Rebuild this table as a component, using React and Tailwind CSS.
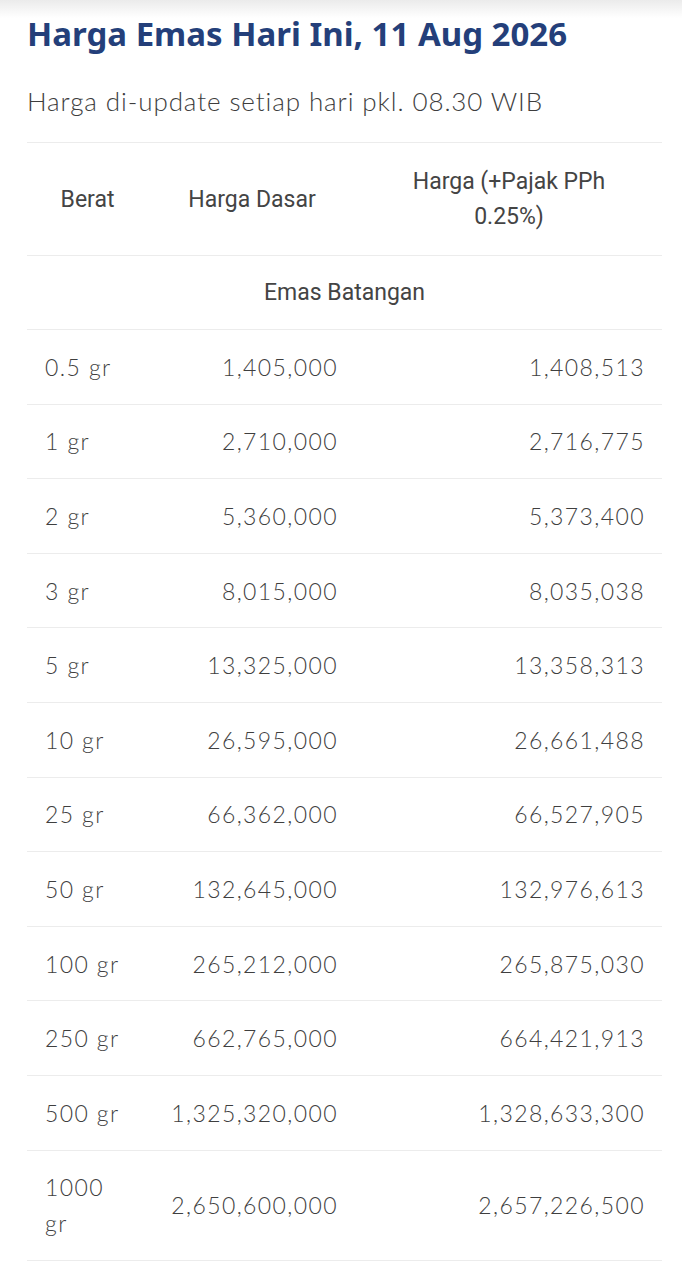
const rows = [
  ["0.5 gr", "1,405,000", "1,408,513"],
  ["1 gr", "2,710,000", "2,716,775"],
  ["2 gr", "5,360,000", "5,373,400"],
  ["3 gr", "8,015,000", "8,035,038"],
  ["5 gr", "13,325,000", "13,358,313"],
  ["10 gr", "26,595,000", "26,661,488"],
  ["25 gr", "66,362,000", "66,527,905"],
  ["50 gr", "132,645,000", "132,976,613"],
  ["100 gr", "265,212,000", "265,875,030"],
  ["250 gr", "662,765,000", "664,421,913"],
  ["500 gr", "1,325,320,000", "1,328,633,300"],
  ["1000 gr", "2,650,600,000", "2,657,226,500"],
];

export default function App() {
  return (
    <div className="min-h-[1262px] bg-[linear-gradient(to_bottom,#ebebeb,#ffffff_18px)] pl-[27px] pr-[20px] pt-[12px] font-['Lato',sans-serif]">
      <h1 className="font-['Noto_Sans',sans-serif] text-[33px] font-bold leading-[44px] text-[#243f7a]">
        Harga Emas Hari Ini, 11 Aug 2026
      </h1>
      <p className="mt-[27px] text-[26px] font-light leading-[36px] tracking-[0.9px] text-[#3d3d3d]">
        Harga di-update setiap hari pkl. 08.30 WIB
      </p>

      <table className="mt-[23px] w-full table-fixed border-collapse text-[#3f3f3f]">
        <colgroup>
          <col className="w-[121px]" />
          <col className="w-[208px]" />
          <col />
        </colgroup>
        <thead>
          <tr className="border-y border-[#ececec] font-['Roboto',sans-serif] text-[23px] leading-[35px] text-[#444444]">
            <th className="px-[10px] py-[21px] text-center font-normal">Berat</th>
            <th className="px-[10px] py-[21px] text-center font-normal">Harga Dasar</th>
            <th className="px-[42px] py-[21px] text-center font-normal">
              Harga (+Pajak PPh 0.25%)
            </th>
          </tr>
        </thead>
        <tbody className="text-[23px] font-light leading-[36px] tracking-[1.4px]">
          <tr className="border-b border-[#ececec]">
            <td
              colSpan={3}
              className="py-[18.5px] text-center font-['Roboto',sans-serif] font-normal tracking-normal text-[#444444]"
            >
              Emas Batangan
            </td>
          </tr>
          {rows.map(([berat, dasar, pajak]) => (
            <tr key={berat} className="border-b border-[#ececec]">
              <td className="px-[18px] py-[18.8px] text-left">
                {berat === "1000 gr" ? (
                  <>
                    1000
                    <br />
                    gr
                  </>
                ) : (
                  berat
                )}
              </td>
              <td className="px-[18px] py-[18.8px] text-right">{dasar}</td>
              <td className="px-[17px] py-[18.8px] text-right">{pajak}</td>
            </tr>
          ))}
        </tbody>
      </table>
    </div>
  );
}
